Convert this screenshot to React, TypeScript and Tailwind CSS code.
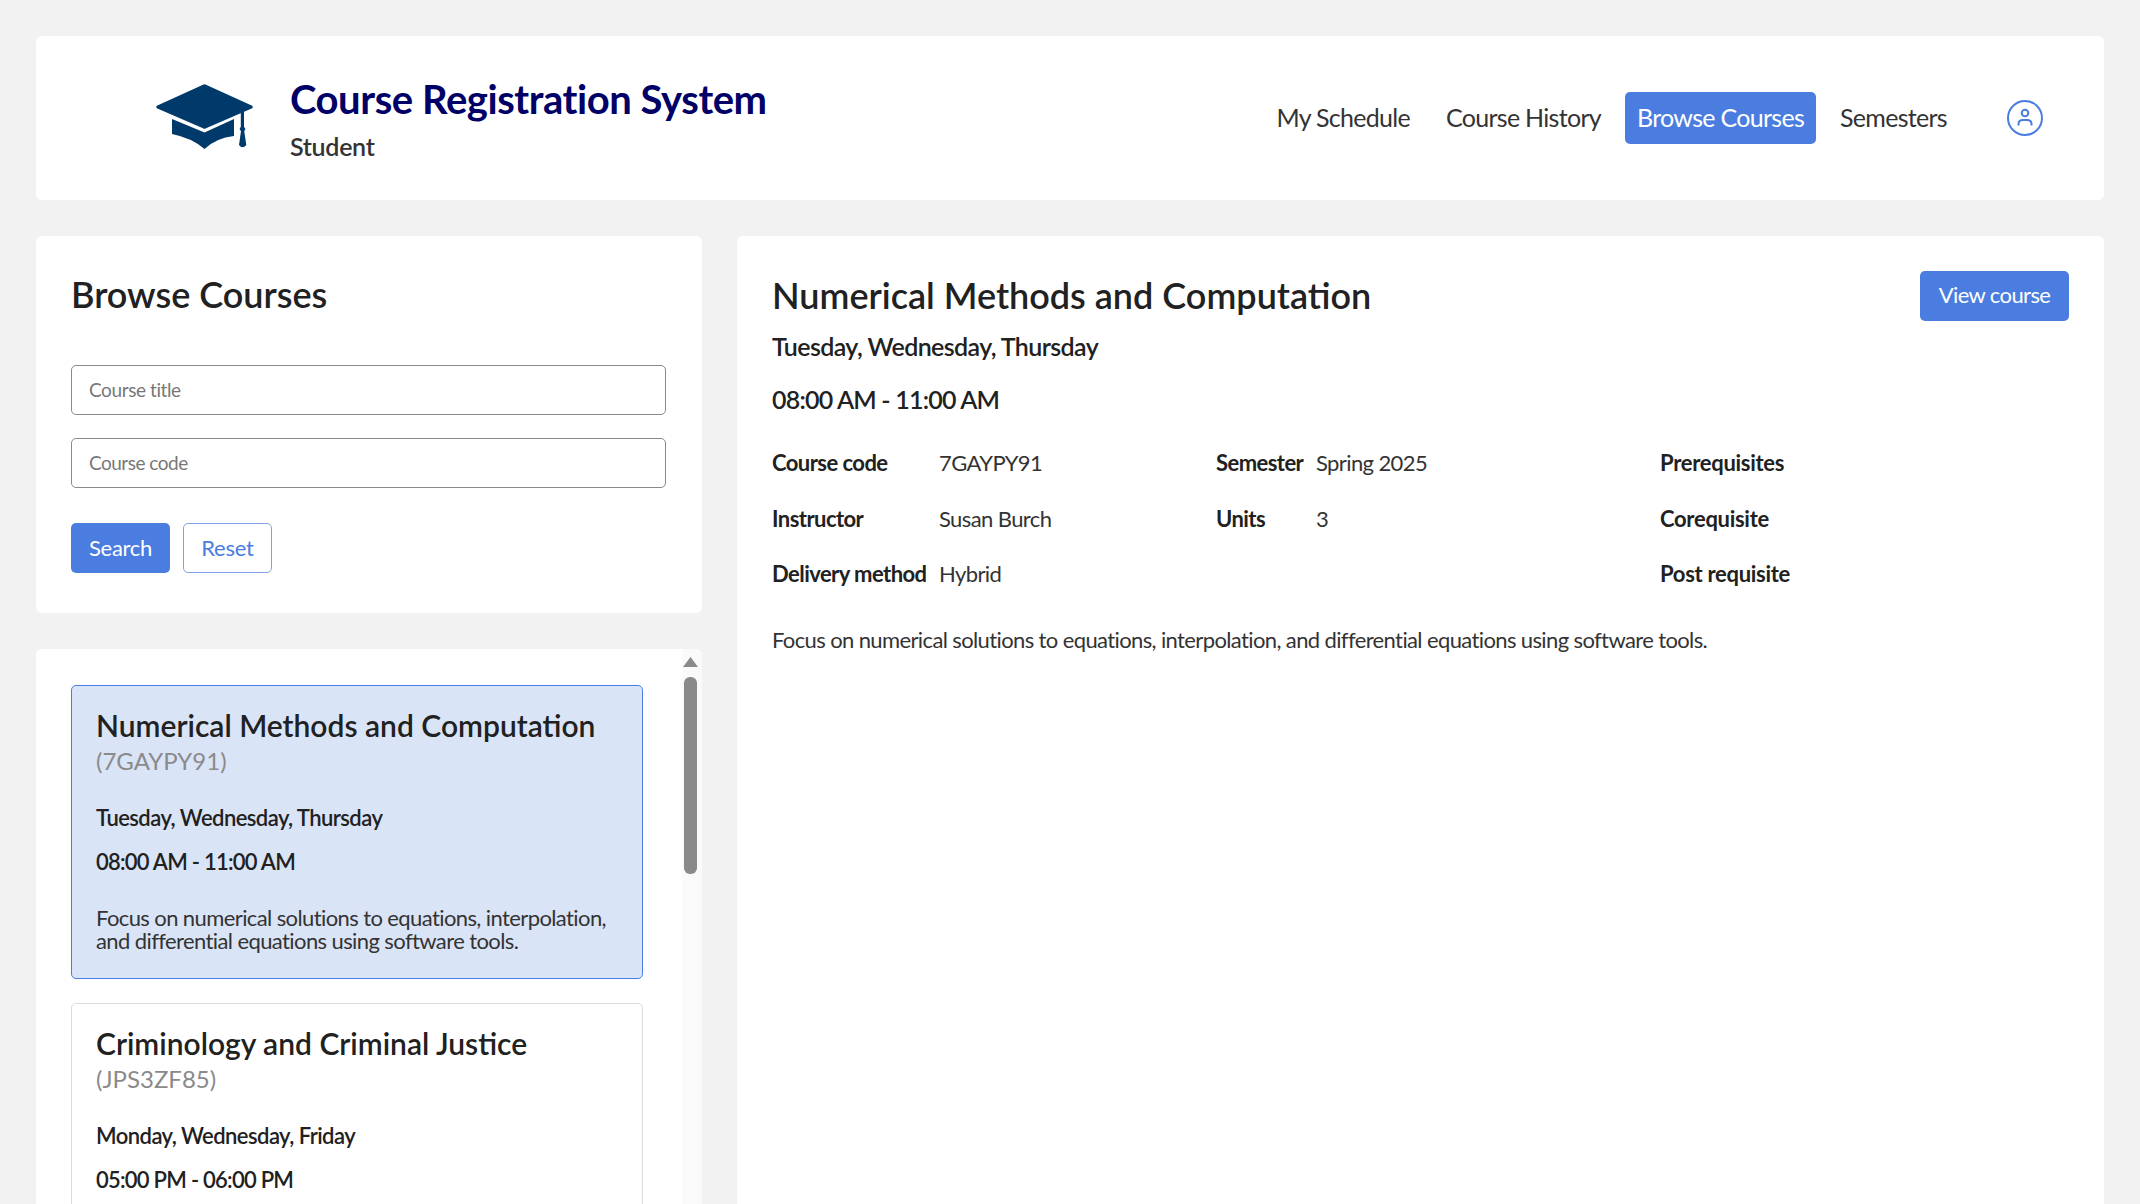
const navItems = ['My Schedule', 'Course History', 'Browse Courses', 'Semesters'];

const courseFacts = [
    ['Course code', '7GAYPY91', 'Semester', 'Spring 2025', 'Prerequisites'],
    ['Instructor', 'Susan Burch', 'Units', '3', 'Corequisite'],
    ['Delivery method', 'Hybrid', '', '', 'Post requisite'],
];

const CapLogo = () => (
    <svg width="97" height="65" viewBox="0 0 97 65" className="shrink-0 mb-[3px]" fill="#003a6b">
        <path d="M47 .7 Q48.500 -.3 50 .7 L96.200 21.800 Q97.300 23 96.200 24.200 L50 44.300 Q48.500 45.300 47 44.300 L.8 24.200 Q-.3 23 .8 21.800 Z" />
        <path d="M16 35 L48.500 48.500 L78 35 L78 52 Q60 54 48.500 65 Q36 54 16 50 Z" />
        <path d="M84.800 28.500 L88 27 L88 43 Q90.500 45 88.200 47 L90.300 61 Q86.500 65.500 83 61 L85 47 Q82.500 45 84.800 43 Z" />
    </svg>
);

const UserIcon = () => (
    <svg width="36" height="36" viewBox="0 0 36 36" fill="none" stroke="#4a7ddf" strokeWidth="2" className="shrink-0">
        <circle cx="18" cy="18" r="17" />
        <circle cx="18" cy="13" r="3.300" />
        <path d="M11.500 25.500 V24 Q11.500 20 16 20 H20 Q24.500 20 24.500 24 V25.500" />
    </svg>
);

const CourseCard = ({ title, code, days, time, description, selected }: { title: string; code: string; days: string; time: string; description?: string; selected?: boolean }) => (
    <div className={`shrink-0 min-h-[294px] rounded-[5px] border-[1.5px] pl-[24px] pr-[22px] pt-[19px] pb-[26px] ${selected ? 'bg-[#dae4f7] border-[#4a7ddf]' : 'bg-white border-[#dcdcdc]'}`}>
        <h3 className="text-[30px] leading-[40px] font-semibold text-[#212121]">{title}</h3>
        <p className="text-[24px] leading-[32px] text-[#8a8a8a]">{code}</p>
        <p className="mt-[26px] text-[22px] leading-[30px] font-semibold tracking-[-0.55px] text-[#212121]">{days}</p>
        <p className="mt-[14px] text-[22px] leading-[30px] font-semibold tracking-[-0.75px] text-[#212121]">{time}</p>
        {description && <p className="mt-[29px] text-[22px] leading-[23px] tracking-[-0.6px] text-[#333333]">{description}</p>}
    </div>
);

const App = () => {
    return (
        <div className="h-screen overflow-hidden bg-[#f2f2f2] p-[36px] pb-0 flex flex-col gap-[36px] font-['Lato','Liberation_Sans',sans-serif] text-[#212121]">
            <header className="h-[164px] shrink-0 bg-white rounded-[6px] flex items-center pl-[120px] pr-[61px]">
                <CapLogo />
                <div className="ml-[37px] flex flex-col">
                    <h1 className="text-[40px] leading-[50px] font-bold tracking-[-0.45px] text-[#000066]">Course Registration System</h1>
                    <p className="text-[25px] leading-[32px] mt-[6px] font-semibold tracking-[-0.3px] text-[#333333]">Student</p>
                </div>
                <nav className="ml-auto flex items-center gap-[12px]">
                    {navItems.map((item) => (
                        <a
                            key={item}
                            className={`h-[52px] flex items-center px-[12px] text-[25px] tracking-[-0.7px] rounded-[5px] ${item === 'Browse Courses' ? 'bg-[#4a7ddf] text-white' : 'text-[#333333]'}`}
                        >
                            {item}
                        </a>
                    ))}
                    <div className="ml-[36px]">
                        <UserIcon />
                    </div>
                </nav>
            </header>

            <div className="flex-1 min-h-0 flex gap-[35px]">
                <div className="w-[666px] shrink-0 flex flex-col gap-[36px]">
                    <section className="h-[377px] shrink-0 bg-white rounded-[6px] pl-[35px] pr-[36px] pt-[35px]">
                        <h2 className="text-[36px] leading-[46px] font-semibold">Browse Courses</h2>
                        <input
                            placeholder="Course title"
                            className="mt-[48px] block w-full h-[50px] rounded-[5px] border-[1.5px] border-[#8a8a8a] pl-[17px] pb-[2px] text-[19px] tracking-[-0.4px] placeholder:text-[#777777]"
                        />
                        <input
                            placeholder="Course code"
                            className="mt-[23px] block w-full h-[50px] rounded-[5px] border-[1.5px] border-[#8a8a8a] pl-[17px] pb-[2px] text-[19px] tracking-[-0.5px] placeholder:text-[#777777]"
                        />
                        <div className="mt-[35px] flex gap-[13px]">
                            <button className="w-[99px] h-[50px] pb-[2px] rounded-[5px] bg-[#4a7ddf] text-white text-[22px] tracking-[-0.3px]">Search</button>
                            <button className="w-[89px] h-[50px] pb-[2px] rounded-[5px] border-[1.5px] border-[#7ea2e8] text-[#4a7ddf] text-[22px] tracking-[-0.2px]">Reset</button>
                        </div>
                    </section>

                    <section className="flex-1 min-h-0 overflow-hidden bg-white rounded-t-[6px] flex">
                        <div className="flex-1 pl-[35px] pr-[39px] pt-[36px] flex flex-col gap-[24px]">
                            <CourseCard
                                selected
                                title="Numerical Methods and Computation"
                                code="(7GAYPY91)"
                                days="Tuesday, Wednesday, Thursday"
                                time="08:00 AM - 11:00 AM"
                                description="Focus on numerical solutions to equations, interpolation, and differential equations using software tools."
                            />
                            <CourseCard
                                title="Criminology and Criminal Justice"
                                code="(JPS3ZF85)"
                                days="Monday, Wednesday, Friday"
                                time="05:00 PM - 06:00 PM"
                            />
                        </div>
                        <div className="w-[20px] shrink-0 bg-[#fafafa] flex flex-col items-center pt-[8px] pr-[3px]">
                            <svg width="15" height="10" viewBox="0 0 15 10" fill="#8a8a8a">
                                <path d="M7.500 0 L15 10 H0 Z" />
                            </svg>
                            <div className="mt-[10px] w-[13px] h-[197px] rounded-[6px] bg-[#8a8a8a]" />
                        </div>
                    </section>
                </div>

                <main className="flex-1 min-w-0 bg-white rounded-t-[6px] px-[35px] pt-[34px]">
                    <div className="flex items-start justify-between">
                        <h2 className="text-[36px] leading-[50px] font-semibold">Numerical Methods and Computation</h2>
                        <button className="mt-[1px] w-[149px] h-[50px] pb-[3px] rounded-[5px] bg-[#4a7ddf] text-white text-[22px] tracking-[-0.6px]">View course</button>
                    </div>
                    <p className="mt-[9px] text-[25px] leading-[32px] font-semibold tracking-[-0.6px]">Tuesday, Wednesday, Thursday</p>
                    <p className="mt-[21px] text-[25px] leading-[32px] font-semibold tracking-[-0.8px]">08:00 AM - 11:00 AM</p>
                    <div className="mt-[33px] grid grid-cols-[167px_277px_100px_344px_1fr] gap-y-[25.500px] text-[22px] leading-[30px]">
                        {courseFacts.map((row) =>
                            row.map((cell, i) => (
                                <span
                                    key={`${row[0]}-${i}`}
                                    className={
                                        i === 4
                                            ? 'font-bold tracking-[-0.3px] text-[#212121]'
                                            : i % 2 === 0
                                              ? 'font-bold tracking-[-0.55px] text-[#212121]'
                                              : 'tracking-[-0.6px] text-[#333333]'
                                    }
                                >
                                    {cell}
                                </span>
                            ))
                        )}
                    </div>
                    <p className="mt-[36px] text-[22px] leading-[30px] tracking-[-0.62px] text-[#333333]">
                        Focus on numerical solutions to equations, interpolation, and differential equations using software tools.
                    </p>
                </main>
            </div>
        </div>
    );
};

export default App;
